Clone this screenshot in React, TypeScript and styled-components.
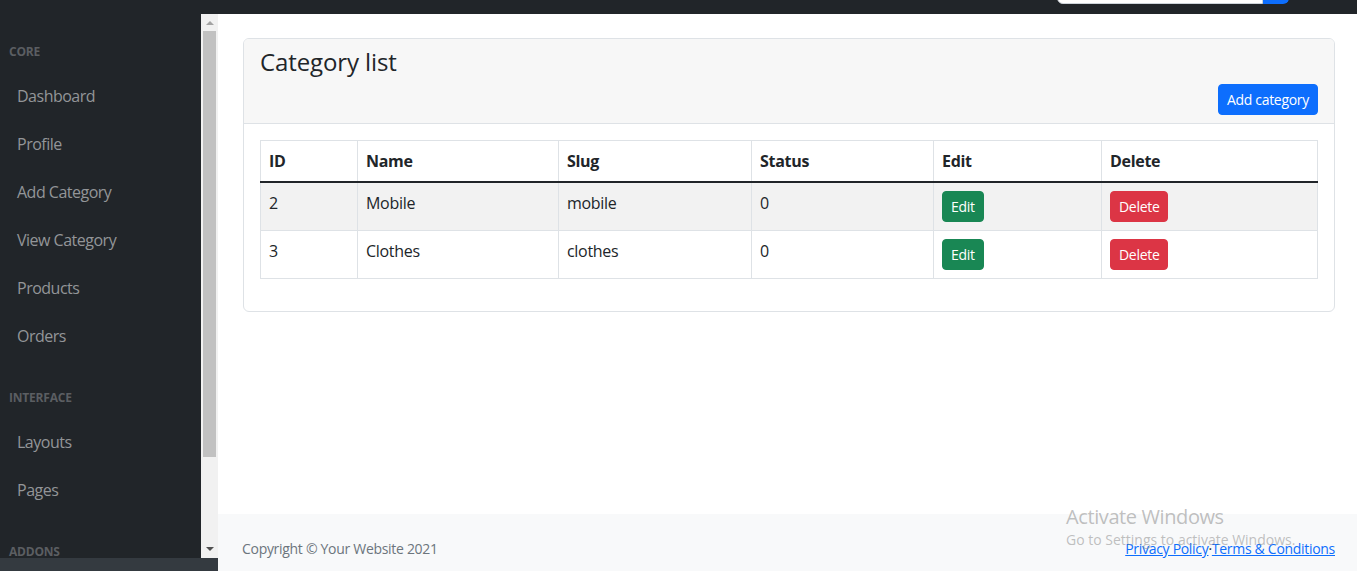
import React from "react";
import styled, { createGlobalStyle } from "styled-components";

const GlobalStyle = createGlobalStyle`
  html, body { margin: 0; padding: 0; height: 100%; overflow: hidden; }
  body {
    font-family: "Open Sans", "Noto Sans", "Liberation Sans", sans-serif;
    font-size: 16px;
    line-height: 1.5;
    letter-spacing: -0.3px;
    color: #212529;
    background: #fff;
  }
  * { box-sizing: border-box; }
`;

const Page = styled.div`
  position: relative;
  height: 571px;
  overflow: hidden;
  display: flex;
  flex-direction: column;
`;

const TopNav = styled.header`
  height: 14px;
  flex-shrink: 0;
  background: #212529;
  display: flex;
  justify-content: flex-end;
  align-items: flex-end;
  padding-right: 68px;
  overflow: hidden;
`;

const SearchGroup = styled.div`
  display: flex;
  height: 38px;
  margin-bottom: 10px;
`;

const SearchInput = styled.div`
  width: 206px;
  background: #fff;
  border: 1px solid #ced4da;
  border-radius: 0 0 0 6px;
`;

const SearchButton = styled.div`
  width: 26px;
  background: #0d6efd;
  border-radius: 0 0 6px 0;
`;

const Body = styled.div`
  flex: 1;
  display: flex;
  min-height: 0;
`;

const Sidebar = styled.nav`
  width: 218px;
  flex-shrink: 0;
  display: flex;
  flex-direction: column;
  background: #212529;
`;

const SideScrollArea = styled.div`
  flex: 1;
  display: flex;
  min-height: 0;
`;

const SideMenu = styled.div`
  width: 201px;
  overflow: hidden;
  display: flex;
  flex-direction: column;
`;

const MenuHeading = styled.div`
  padding: 29px 9px 11px;
  font-size: 12px;
  line-height: 18px;
  font-weight: 700;
  letter-spacing: -0.2px;
  text-transform: uppercase;
  color: #5b5e62;
  flex-shrink: 0;
`;

const MenuLink = styled.a`
  display: block;
  padding: 12px 17px;
  font-size: 16px;
  line-height: 24px;
  letter-spacing: -0.5px;
  color: #939598;
  text-decoration: none;
  flex-shrink: 0;
`;

const ScrollTrack = styled.div`
  width: 17px;
  background: #f1f1f1;
  display: flex;
  flex-direction: column;
  align-items: center;
`;

const ScrollArrow = styled.div<{ $dir: "up" | "down"; $color: string }>`
  width: 0;
  height: 0;
  border-left: 4px solid transparent;
  border-right: 4px solid transparent;
  ${(p) =>
    p.$dir === "up"
      ? `border-bottom: 4px solid ${p.$color}; margin-top: 7px;`
      : `border-top: 4px solid ${p.$color}; margin-top: auto; margin-bottom: 7px;`}
`;

const ScrollThumb = styled.div`
  width: 13px;
  height: 426px;
  margin-top: 6px;
  background: #c1c1c1;
`;

const SideFooter = styled.div`
  height: 13px;
  flex-shrink: 0;
  background: #343a40;
`;

const Content = styled.div`
  flex: 1;
  display: flex;
  flex-direction: column;
  min-width: 0;
`;

const Main = styled.main`
  height: 500px;
  flex-shrink: 0;
  padding: 24px 22px 0 25px;
`;

const Card = styled.section`
  border: 1px solid #dee2e6;
  border-radius: 6px;
  background: #fff;
`;

const CardHeader = styled.div`
  background: #f7f7f7;
  border-bottom: 1px solid #dee2e6;
  border-radius: 5px 5px 0 0;
  padding: 8px 16px;
  display: flex;
  flex-direction: column;
`;

const Title = styled.h4`
  margin: 0 0 8px;
  padding-top: 1px;
  font-size: 24px;
  font-weight: 500;
  line-height: 28px;
  letter-spacing: -0.1px;
`;

const Button = styled.button<{ $bg: string }>`
  font-family: inherit;
  font-size: 14px;
  line-height: 21px;
  letter-spacing: -0.3px;
  padding: 4px 8px;
  border: 1px solid ${(p) => p.$bg};
  border-radius: 4px;
  background: ${(p) => p.$bg};
  color: #fff;
  cursor: pointer;
`;

const HeaderButton = styled(Button)`
  align-self: flex-end;
`;

const CardBody = styled.div`
  padding: 16px 16px 32px;
`;

const Table = styled.table`
  width: 100%;
  border-collapse: collapse;
  table-layout: fixed;
`;

const Col = styled.col<{ $w?: number }>`
  width: ${(p) => (p.$w ? `${p.$w}px` : "auto")};
`;

const Th = styled.th`
  text-align: left;
  font-weight: 700;
  padding: 8px;
  border: 1px solid #dee2e6;
  border-bottom: 2px solid #212529;
  line-height: 24px;
  vertical-align: top;
`;

const Tr = styled.tr<{ $striped?: boolean }>`
  background: ${(p) => (p.$striped ? "#f2f2f2" : "#fff")};
`;

const Td = styled.td`
  padding: 8px 8px 8px;
  border: 1px solid #dee2e6;
  line-height: 24px;
  height: 48px;
  vertical-align: top;
`;

const Footer = styled.footer`
  background: #f8f9fa;
  padding: 24px 22px 24px 24px;
  display: flex;
  justify-content: space-between;
  align-items: center;
  font-size: 14px;
  line-height: 21px;
`;

const Muted = styled.div`
  color: #6c757d;
`;

const Links = styled.div`
  color: #212529;
  a {
    color: #0d6efd;
    text-decoration: underline;
  }
`;

const Watermark = styled.div`
  position: absolute;
  left: 1066px;
  top: 504px;
  color: rgba(140, 140, 140, 0.55);
  pointer-events: none;
`;

const WatermarkTitle = styled.div`
  font-size: 20px;
  line-height: 26px;
  letter-spacing: -0.4px;
`;

const WatermarkText = styled.div`
  font-size: 14px;
  line-height: 19px;
  letter-spacing: 0;
`;

type Row = { id: number; name: string; slug: string; status: number };

const rows: Row[] = [
  { id: 2, name: "Mobile", slug: "mobile", status: 0 },
  { id: 3, name: "Clothes", slug: "clothes", status: 0 },
];

const colWidths = [97, 201, 193, 182, 168, undefined];

export default function App() {
  return (
    <Page>
      <GlobalStyle />
      <TopNav>
        <SearchGroup>
          <SearchInput />
          <SearchButton />
        </SearchGroup>
      </TopNav>
      <Body>
        <Sidebar>
          <SideScrollArea>
            <SideMenu>
              <MenuHeading>Core</MenuHeading>
              <MenuLink>Dashboard</MenuLink>
              <MenuLink>Profile</MenuLink>
              <MenuLink>Add Category</MenuLink>
              <MenuLink>View Category</MenuLink>
              <MenuLink>Products</MenuLink>
              <MenuLink>Orders</MenuLink>
              <MenuHeading>Interface</MenuHeading>
              <MenuLink>Layouts</MenuLink>
              <MenuLink>Pages</MenuLink>
              <MenuHeading>Addons</MenuHeading>
              <MenuLink>Charts</MenuLink>
            </SideMenu>
            <ScrollTrack>
              <ScrollArrow $dir="up" $color="#a3a3a3" />
              <ScrollThumb />
              <ScrollArrow $dir="down" $color="#505050" />
            </ScrollTrack>
          </SideScrollArea>
          <SideFooter />
        </Sidebar>
        <Content>
          <Main>
            <Card>
              <CardHeader>
                <Title>Category list</Title>
                <HeaderButton $bg="#0d6efd">Add category</HeaderButton>
              </CardHeader>
              <CardBody>
                <Table>
                  <colgroup>
                    {colWidths.map((w, i) => (
                      <Col key={i} $w={w} />
                    ))}
                  </colgroup>
                  <thead>
                    <tr>
                      <Th>ID</Th>
                      <Th>Name</Th>
                      <Th>Slug</Th>
                      <Th>Status</Th>
                      <Th>Edit</Th>
                      <Th>Delete</Th>
                    </tr>
                  </thead>
                  <tbody>
                    {rows.map((r, i) => (
                      <Tr key={r.id} $striped={i % 2 === 0}>
                        <Td>{r.id}</Td>
                        <Td>{r.name}</Td>
                        <Td>{r.slug}</Td>
                        <Td>{r.status}</Td>
                        <Td>
                          <Button $bg="#198754">Edit</Button>
                        </Td>
                        <Td>
                          <Button $bg="#dc3545">Delete</Button>
                        </Td>
                      </Tr>
                    ))}
                  </tbody>
                </Table>
              </CardBody>
            </Card>
          </Main>
          <Footer>
            <Muted>Copyright © Your Website 2021</Muted>
            <Links>
              <a href="#">Privacy Policy</a>·<a href="#">Terms &amp; Conditions</a>
            </Links>
          </Footer>
        </Content>
      </Body>
      <Watermark>
        <WatermarkTitle>Activate Windows</WatermarkTitle>
        <WatermarkText>Go to Settings to activate Windows.</WatermarkText>
      </Watermark>
    </Page>
  );
}
